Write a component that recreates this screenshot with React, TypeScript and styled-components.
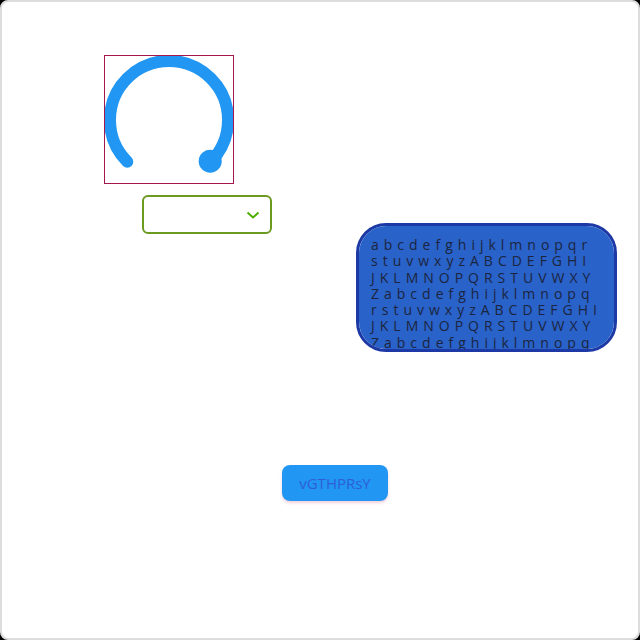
import React from 'react';
import styled, { createGlobalStyle } from 'styled-components';

const GlobalStyle = createGlobalStyle`
  html, body {
    margin: 0;
    padding: 0;
    background: #000;
  }
  * {
    box-sizing: border-box;
  }
`;

const LINES = [
  'abcdefghijklmnopqr',
  'stuvwxyzABCDEFGHI',
  'JKLMNOPQRSTUVWXY',
  'Zabcdefghijklmnopq',
  'rstuvwxyzABCDEFGHI',
  'JKLMNOPQRSTUVWXY',
  'Zabcdefghijklmnopq',
  'rstuvwxyzABCDEFGHI',
  'JKLMNOPQRSTUVWXY',
  'Z',
];

function App() {
  return (
    <>
      <GlobalStyle />
      <Frame>
        <Knob>
          <svg width="128" height="128" viewBox="1 1 128 128">
            <path
              d="M 23.3 106.7 A 59 59 0 1 1 106.7 106.7"
              fill="none"
              stroke="#2196f3"
              strokeWidth="12"
              strokeLinecap="round"
            />
            <circle cx="106.2" cy="106.2" r="11.5" fill="#2196f3" />
          </svg>
        </Knob>
        <Row>
          <Select>
            <Chevron width="14" height="8" viewBox="0 0 14 8">
              <path d="M1.5 1.5 L7 6.5 L12.5 1.5" fill="none" stroke="#4caf00" strokeWidth="2" />
            </Chevron>
          </Select>
          <TextBox readOnly value={LINES.join('\n')} />
        </Row>
        <Button>vGTHPRsY</Button>
      </Frame>
    </>
  );
}

export default App;

const Frame = styled.div`
  width: 640px;
  height: 640px;
  background: #fff;
  border: 2px solid #dcdcdc;
  border-radius: 8px;
  display: flex;
  flex-direction: column;
  align-items: flex-start;
  overflow: hidden;
`;

const Knob = styled.div`
  width: 130px;
  height: 129px;
  margin: 53px 0 0 102px;
  border: 1px solid #a3174d;
  display: flex;

  svg {
    display: block;
  }
`;

const Row = styled.div`
  display: flex;
  align-items: flex-start;
  margin-top: 11px;
`;

const Select = styled.div`
  width: 130px;
  height: 39px;
  margin-left: 140px;
  border: 2px solid #6c9a21;
  border-radius: 6px;
  display: flex;
  align-items: center;
  justify-content: flex-end;
  padding-right: 10px;
`;

const Chevron = styled.svg`
  display: block;
`;

const TextBox = styled.textarea`
  width: 261px;
  height: 129px;
  margin: 28px 0 0 84px;
  padding: 11px 12px;
  border: 3px solid #1c39a6;
  border-radius: 30px;
  background: #2962c8;
  color: #1c2540;
  font-family: 'Open Sans', 'Liberation Sans', sans-serif;
  font-size: 14px;
  line-height: 16.3px;
  letter-spacing: 5px;
  white-space: pre;
  overflow-x: hidden;
  overflow-y: auto;
  resize: none;
  outline: none;

  &::-webkit-scrollbar {
    width: 8px;
  }
  &::-webkit-scrollbar-track {
    background: transparent;
  }
  &::-webkit-scrollbar-thumb {
    background: #c8c8c8;
    border-radius: 4px;
  }
`;

const Button = styled.button`
  width: 106px;
  height: 36px;
  margin: 113px 0 0 280px;
  border: none;
  border-radius: 8px;
  background: #2196f3;
  color: #2f5fd8;
  font-family: 'Open Sans', 'Liberation Sans', sans-serif;
  font-size: 15px;
  box-shadow: 0 2px 3px rgba(220, 120, 150, 0.35);
  padding: 0;
`;
